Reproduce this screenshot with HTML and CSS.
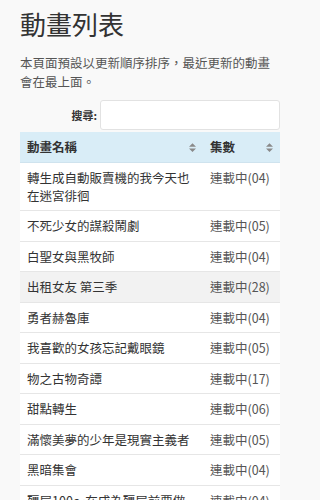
FILE: index.html
```html
<!DOCTYPE html>
<html lang="zh-Hant">
<head>
<meta charset="utf-8">
<link rel="stylesheet" href="styles.css">
</head>
<body>
<div class="page">
  <h1 class="title">動畫列表</h1>
  <p class="intro">本頁面預設以更新順序排序，最近更新的動畫會在最上面。</p>
  <div class="search">
    <label class="search-label">搜尋:</label>
    <input class="search-input" type="text">
  </div>
  <table class="list">
    <thead>
      <tr>
        <th class="col-name"><span class="th-inner">動畫名稱<svg class="sort" viewBox="0 0 8 10" width="7" height="9"><path d="M4 0 L8 4 L0 4 Z M0 6 L8 6 L4 10 Z" fill="#8a8a8a"/></svg></span></th>
        <th class="col-ep"><span class="th-inner">集數<svg class="sort" viewBox="0 0 8 10" width="7" height="9"><path d="M4 0 L8 4 L0 4 Z M0 6 L8 6 L4 10 Z" fill="#8a8a8a"/></svg></span></th>
      </tr>
    </thead>
    <tbody>
      <tr><td>轉生成自動販賣機的我今天也在迷宮徘徊</td><td>連載中(04)</td></tr>
      <tr><td>不死少女的謀殺鬧劇</td><td>連載中(05)</td></tr>
      <tr><td>白聖女與黑牧師</td><td>連載中(04)</td></tr>
      <tr class="hl"><td>出租女友 第三季</td><td>連載中(28)</td></tr>
      <tr><td>勇者赫魯庫</td><td>連載中(04)</td></tr>
      <tr><td>我喜歡的女孩忘記戴眼鏡</td><td>連載中(05)</td></tr>
      <tr><td>物之古物奇譚</td><td>連載中(17)</td></tr>
      <tr><td>甜點轉生</td><td>連載中(06)</td></tr>
      <tr><td>滿懷美夢的少年是現實主義者</td><td>連載中(05)</td></tr>
      <tr><td>黑暗集會</td><td>連載中(04)</td></tr>
      <tr><td>殭屍100～在成為殭屍前要做的100件事～</td><td>連載中(04)</td></tr>
    </tbody>
  </table>
</div>
</body>
</html>
```
FILE: styles.css
```css
html, body {
  margin: 0;
  padding: 0;
  background: #f9f9f9;
}
body {
  font-family: "Noto Sans CJK TC", "Open Sans", "Noto Sans", sans-serif;
  color: #333;
}
.page {
  width: 260px;
  padding: 9px 20px 0 20px;
}
.title {
  margin: 0;
  font-size: 26px;
  line-height: 30px;
  font-weight: 400;
  color: #333;
}
.intro {
  margin: 14px 0 0 0;
  font-size: 12.5px;
  line-height: 19px;
  color: #555;
}
.search {
  display: flex;
  justify-content: flex-end;
  align-items: center;
  gap: 3px;
  margin-top: 9px;
}
.search-label {
  font-size: 11px;
  font-weight: 700;
  color: #333;
}
.search-input {
  width: 180px;
  height: 30px;
  box-sizing: border-box;
  border: 1px solid #e2e2e2;
  border-radius: 3px;
  background: #fff;
  margin: 0;
  padding: 0 6px;
}
.list {
  width: 260px;
  border-collapse: collapse;
  margin-top: 2px;
  font-size: 12.5px;
  line-height: 17.5px;
}
.list th {
  background: #d9edf7;
  text-align: left;
  font-weight: 700;
  font-size: 12.5px;
  height: 30px;
  padding: 0 7px;
  color: #333;
  border-bottom: 1px solid #cfe3ee;
}
.th-inner {
  display: flex;
  justify-content: space-between;
  align-items: center;
}
.col-name {
  width: 169px;
}
.list td {
  background: #fff;
  color: #333;
  padding: 6px 7px;
  border-top: 1px solid #e6e6e6;
  vertical-align: top;
}
.list td + td {
  color: #555;
  white-space: nowrap;
}
.list tr.hl td {
  background: #f2f2f2;
}
.list tbody tr:first-child td {
  border-top: 0;
}
```
